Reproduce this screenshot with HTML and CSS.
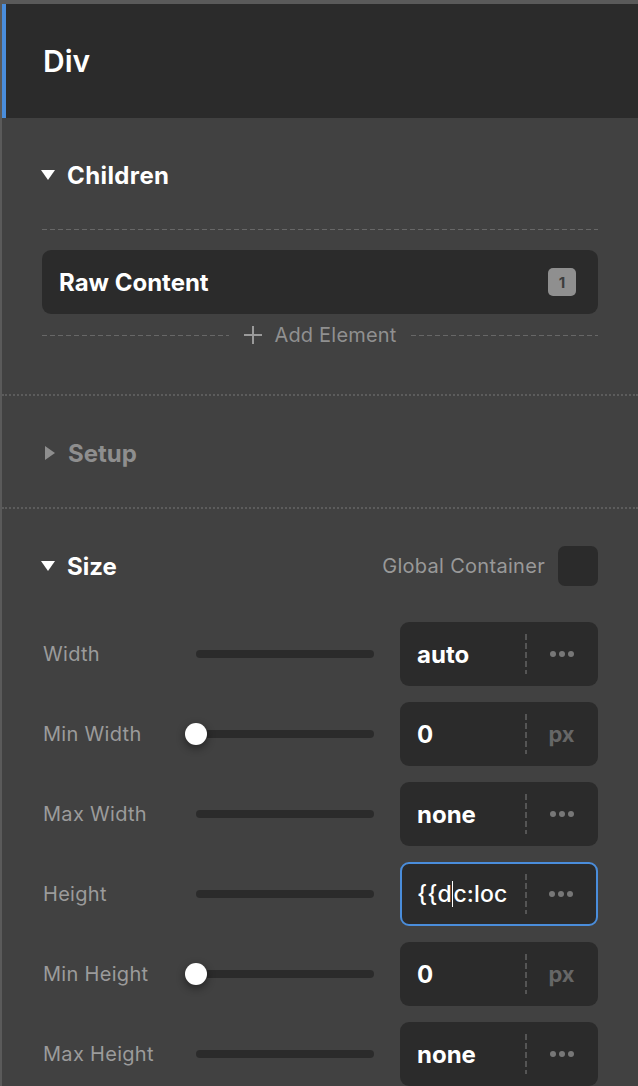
FILE: index.html
```
<!DOCTYPE html>
<html>
<head>
<meta charset="utf-8">
<link rel="stylesheet" href="styles.css">
</head>
<body>
<div class="panel">
  <div class="header"><span class="title">Div</span></div>

  <section class="section children">
    <div class="sec-head">
      <span class="tri-down"></span><span class="sec-title wide">Children</span>
    </div>
    <div class="child-list">
      <div class="child-item">
        <span class="child-name">Raw Content</span>
        <span class="badge">1</span>
      </div>
    </div>
    <div class="add-row">
      <span class="dash"></span>
      <span class="add-btn">
        <svg class="plus" width="20" height="20" viewBox="0 0 20 20"><path d="M10 1v18M1 10h18" stroke="#9a9a9a" stroke-width="2" fill="none"/></svg>
        <span>Add Element</span>
      </span>
      <span class="dash"></span>
    </div>
  </section>

  <section class="section setup">
    <div class="sec-head">
      <span class="tri-right"></span><span class="sec-title muted">Setup</span>
    </div>
  </section>

  <section class="section size">
    <div class="sec-head">
      <span class="tri-down"></span><span class="sec-title">Size</span>
      <span class="spacer"></span>
      <span class="gc-label">Global Container</span>
      <span class="checkbox"></span>
    </div>
    <div class="rows">
      <div class="row">
        <span class="label">Width</span>
        <span class="track"></span>
        <div class="input"><span class="val">auto</span><span class="suffix"><span class="dots"><i></i><i></i><i></i></span></span></div>
      </div>
      <div class="row">
        <span class="label">Min Width</span>
        <span class="track"><span class="thumb"></span></span>
        <div class="input"><span class="val">0</span><span class="suffix"><span class="unit">px</span></span></div>
      </div>
      <div class="row">
        <span class="label">Max Width</span>
        <span class="track"></span>
        <div class="input"><span class="val">none</span><span class="suffix"><span class="dots"><i></i><i></i><i></i></span></span></div>
      </div>
      <div class="row">
        <span class="label">Height</span>
        <span class="track"></span>
        <div class="input focused"><span class="val editing">{{d<span class="caret"></span>c:local</span><span class="suffix"><span class="dots"><i></i><i></i><i></i></span></span></div>
      </div>
      <div class="row">
        <span class="label">Min Height</span>
        <span class="track"><span class="thumb"></span></span>
        <div class="input"><span class="val">0</span><span class="suffix"><span class="unit">px</span></span></div>
      </div>
      <div class="row">
        <span class="label">Max Height</span>
        <span class="track"></span>
        <div class="input"><span class="val">none</span><span class="suffix"><span class="dots"><i></i><i></i><i></i></span></span></div>
      </div>
    </div>
  </section>
</div>
</body>
</html>
```

FILE: styles.css
```
* { box-sizing: border-box; }
html, body {
  margin: 0;
  padding: 0;
  background: #414141;
  height: 100%;
  overflow: hidden;
}
body {
  font-family: Inter, "Noto Sans", "Liberation Sans", sans-serif;
  color: #fff;
}
.panel {
  border-top: 4px solid #5a5a5a;
  border-left: 2px solid #5a5a5a;
  min-height: 1086px;
  background: #414141;
}
.header {
  height: 114px;
  background: #2b2b2b;
  border-left: 4px solid #4a8ddb;
  display: flex;
  align-items: center;
  padding-left: 37px;
}
.title {
  font-size: 30px;
  font-weight: 600;
  color: #fff;
}
.section {
  padding: 42px 40px 0 40px;
  border-bottom: 2px dotted #5c5c5c;
}
.sec-head {
  height: 30px;
  display: flex;
  align-items: center;
}
.tri-down {
  width: 0; height: 0;
  border-left: 7.5px solid transparent;
  border-right: 7.5px solid transparent;
  border-top: 10px solid #fff;
  margin-left: -1px;
  margin-right: 12px;
}
.tri-right {
  width: 0; height: 0;
  border-top: 7px solid transparent;
  border-bottom: 7px solid transparent;
  border-left: 10px solid #8e8e8e;
  margin-left: 3px;
  margin-right: 13px;
}
.sec-title {
  font-size: 24px;
  font-weight: 700;
  color: #fff;
}
.sec-title.wide { letter-spacing: 0.4px; }
.sec-title.muted { color: #8e8e8e; }
.spacer { flex: 1; }

/* Children */
.children { padding-bottom: 38px; }
.child-list {
  margin-top: 39px;
  padding-top: 21px;
  background-image: repeating-linear-gradient(to right, #676767 0 5px, transparent 5px 8px);
  background-size: 100% 1px;
  background-repeat: no-repeat;
  background-position: 0 0;
}
.child-item {
  height: 64px;
  background: #2b2b2b;
  border-radius: 9px;
  display: flex;
  align-items: center;
  padding: 0 22px 0 17px;
}
.child-name {
  font-size: 24px;
  font-weight: 700;
  flex: 1;
}
.badge {
  width: 28px;
  height: 28px;
  border-radius: 5px;
  background: #8f8f8f;
  color: #3d3d3d;
  font-size: 15px;
  font-weight: 700;
  display: flex;
  align-items: center;
  justify-content: center;
}
.add-row {
  height: 42px;
  display: flex;
  align-items: center;
}
.dash {
  flex: 1;
  height: 1px;
  background-image: repeating-linear-gradient(to right, #676767 0 5px, transparent 5px 8px);
}
.add-btn {
  display: flex;
  align-items: center;
  gap: 11px;
  padding: 0 14px;
  color: #909090;
  font-size: 20px;
  letter-spacing: 0.2px;
}
.plus { display: block; }

/* Setup */
.setup { padding-bottom: 39px; padding-top: 42px; }

/* Size */
.size { border-bottom: none; padding-top: 37px; }
.size .sec-head { height: 40px; }
.gc-label {
  color: #999;
  font-size: 20px;
  letter-spacing: 0.3px;
  margin-right: 13px;
}
.checkbox {
  width: 40px;
  height: 40px;
  border-radius: 7px;
  background: #2b2b2b;
}
.rows {
  margin-top: 36px;
  display: flex;
  flex-direction: column;
  gap: 16px;
}
.row {
  display: flex;
  align-items: center;
  height: 64px;
}
.label {
  width: 154px;
  padding-left: 1px;
  color: #9b9b9b;
  font-size: 20px;
  letter-spacing: 0.3px;
}
.track {
  position: relative;
  width: 178px;
  height: 8px;
  border-radius: 4px;
  background: #2b2b2b;
  margin-right: 26px;
}
.thumb {
  position: absolute;
  left: -11px;
  top: -7px;
  width: 22px;
  height: 22px;
  border-radius: 50%;
  background: #fff;
  box-shadow: 0 3px 8px rgba(0,0,0,0.45);
}
.input {
  width: 198px;
  height: 64px;
  background: #2b2b2b;
  border-radius: 9px;
  display: flex;
  align-items: center;
  overflow: hidden;
}
.input.focused {
  border: 2px solid #4a8ddb;
}
.val {
  width: 90px;
  margin: 0 18px 0 17px;
  font-size: 24px;
  font-weight: 700;
  white-space: nowrap;
  overflow: hidden;
}
.focused .val { margin-left: 15px; }
.val.editing {
  font-weight: 500;
  font-size: 23px;
  letter-spacing: 0.2px;
}
.caret {
  display: inline-block;
  width: 1.5px;
  height: 26px;
  background: #fff;
  vertical-align: -5px;
}
.suffix {
  flex: 1;
  height: 40px;
  display: flex;
  align-items: center;
  justify-content: center;
  background-image: repeating-linear-gradient(to bottom, #555 0 6px, transparent 6px 9px);
  background-size: 2px 100%;
  background-repeat: no-repeat;
  background-position: 0 0;
}
.dots { display: flex; gap: 3px; }
.dots i {
  display: block;
  width: 6px;
  height: 6px;
  border-radius: 50%;
  background: #777;
}
.unit {
  color: #666;
  font-size: 22px;
  font-weight: 700;
}
```
